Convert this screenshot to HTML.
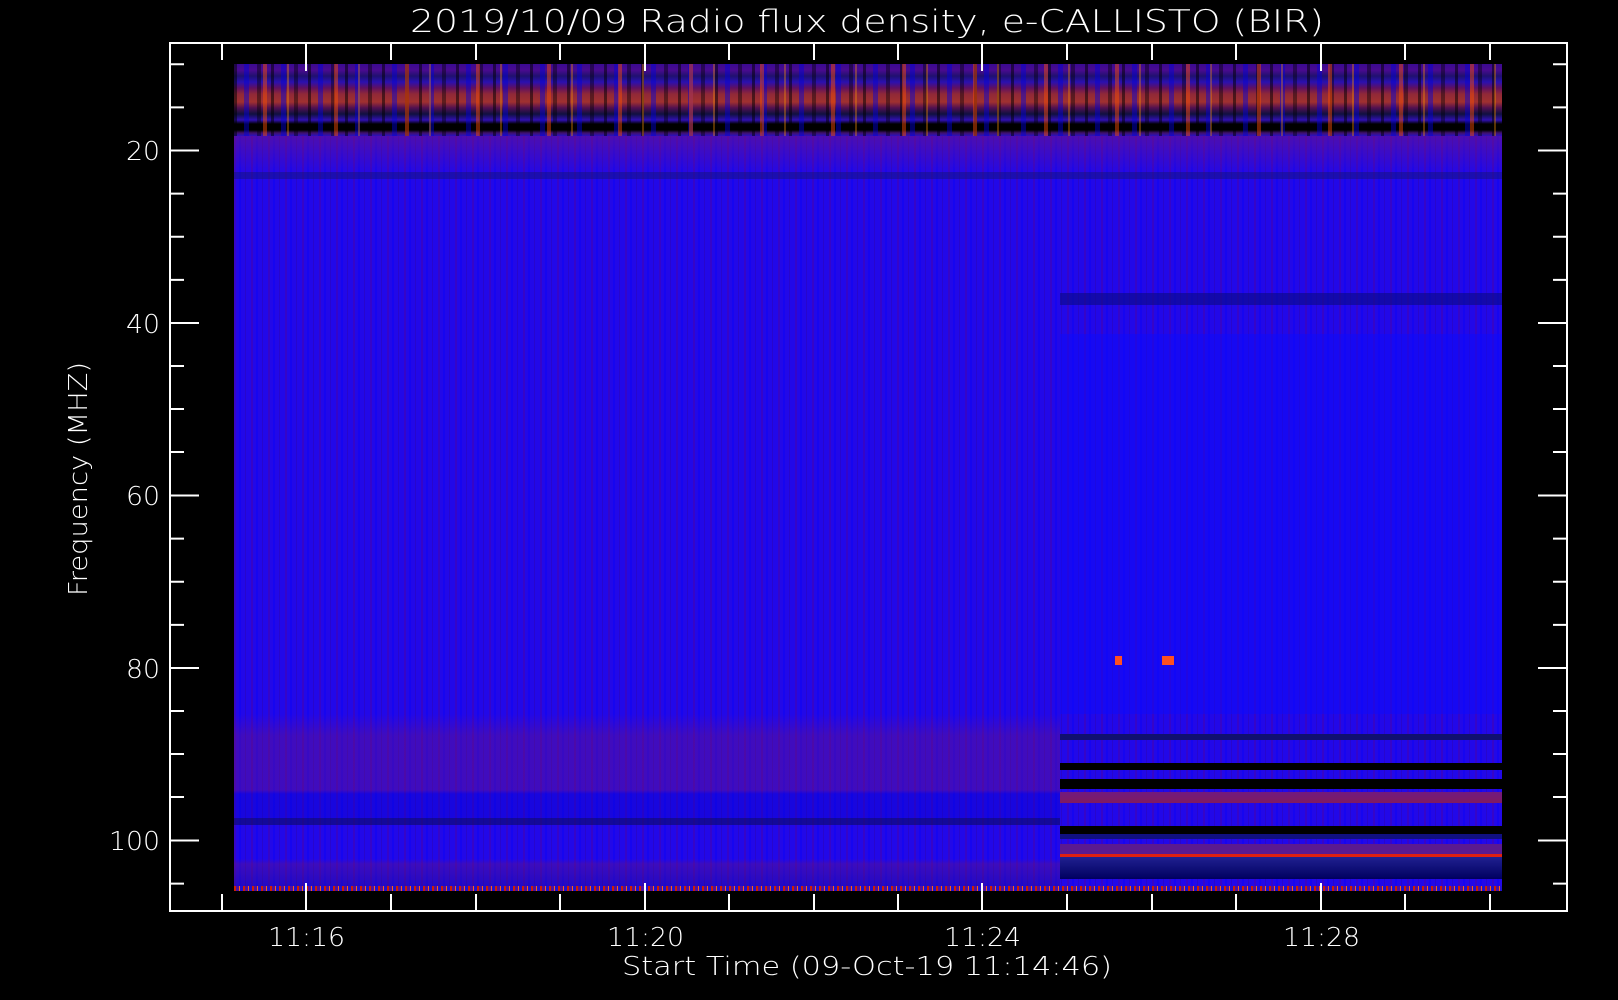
<!DOCTYPE html>
<html><head><meta charset="utf-8"><style>
html,body{margin:0;padding:0;background:#000;width:1618px;height:1000px;overflow:hidden}
#d{position:absolute;left:234px;top:64px;width:1268px;height:827px;background:#2208e8;overflow:hidden}
.b{position:absolute}
svg{position:absolute;left:0;top:0}
text{font-family:"DejaVu Sans","Liberation Sans",sans-serif;fill:#fff;font-weight:300}
</style></head><body>
<div id="d">
 <div class="b" style="left:0;top:0;width:1268px;height:827px;background:repeating-linear-gradient(90deg,rgba(90,0,140,.35) 0 2px,rgba(0,0,255,0) 2px 5px,rgba(0,0,255,.35) 5px 7px,rgba(0,0,255,0) 7px 11px,rgba(60,0,120,.25) 11px 12px,rgba(0,0,255,0) 12px 17px)"></div>
 <div class="b" style="left:0;top:0;width:1268px;height:72px;background:linear-gradient(180deg,#3a0a90 0,#4a0a90 6px,#201070 12px,#2a10b0 18px,#601060 24px,#902838 30px,#a03030 38px,#501050 44px,#101040 50px,#3010b0 56px,#000 60px,#000 66px,#401070 69px,#2a10c0 72px)"></div>
 <div class="b" style="left:0;top:0;width:1268px;height:72px;background:repeating-linear-gradient(90deg,rgba(0,0,0,.5) 0 3px,rgba(0,0,0,0) 3px 10px,rgba(0,0,220,.45) 10px 15px,rgba(0,0,0,0) 15px 23px,rgba(0,0,0,.4) 23px 27px,rgba(0,0,0,0) 27px 37px)"></div>
 <div class="b" style="left:0;top:0;width:1268px;height:72px;background:repeating-linear-gradient(90deg,rgba(255,80,0,0) 0 29px,rgba(255,80,0,.45) 29px 33px,rgba(255,80,0,0) 33px 53px,rgba(255,150,0,.35) 53px 55px,rgba(255,80,0,0) 55px 71px)"></div>
 <div class="b" style="left:0;top:72px;width:1268px;height:40px;background:linear-gradient(180deg,rgba(120,20,120,.5),rgba(0,0,0,0))"></div>
 <div class="b" style="left:0;top:108px;width:1268px;height:7px;background:rgba(20,20,120,.5)"></div>
 <div class="b" style="left:826px;top:229px;width:442px;height:12px;background:rgba(10,10,130,.6)"></div>
 <div class="b" style="left:826px;top:270px;width:442px;height:380px;background:rgba(10,10,255,.45)"></div>
 <div class="b" style="left:0;top:650px;width:826px;height:177px;background:linear-gradient(180deg,rgba(0,0,0,0) 0,rgba(120,20,110,.35) 22px,rgba(120,20,110,.35) 76px,rgba(0,0,200,.3) 80px,rgba(0,0,200,.3) 104px,rgba(10,10,100,.6) 104px,rgba(10,10,100,.6) 111px,rgba(0,0,0,0) 111px,rgba(0,0,0,0) 145px,rgba(110,20,110,.35) 150px,rgba(20,10,120,.3) 177px)"></div>
 <div class="b" style="left:826px;top:0;width:442px;height:827px;background:linear-gradient(180deg,rgba(0,0,0,0) 0,rgba(0,0,0,0) 670px,#101070 670px,#101070 676px,rgba(0,0,0,0) 676px,rgba(0,0,0,0) 699px,#000 699px,#000 706px,rgba(0,0,0,0) 706px,rgba(0,0,0,0) 715px,#000 715px,#000 725px,rgba(0,0,0,0) 725px,rgba(0,0,0,0) 728px,#701a80 728px,#801a60 739px,rgba(0,0,0,0) 739px,rgba(0,0,0,0) 762px,#000 762px,#000 770px,#101080 770px,#101080 775px,rgba(0,0,0,0) 775px,rgba(0,0,0,0) 780px,#5a1a90 780px,#5a1a90 790px,#e02010 790px,#e02010 793px,#202090 793px,#000060 815px,rgba(0,0,0,0) 815px)"></div>
 <div class="b" style="left:0;top:822px;width:1268px;height:5px;background:repeating-linear-gradient(90deg,#d02000 0 2px,#5010a0 2px 5px,#ff6010 5px 6px,#2010d0 6px 9px)"></div>
 <div class="b" style="left:881px;top:592px;width:7px;height:9px;background:#ff5020"></div>
 <div class="b" style="left:928px;top:592px;width:12px;height:9px;background:#ff5020"></div>
</div>
<svg width="1618" height="1000" viewBox="0 0 1618 1000">
<g stroke="#fff" stroke-width="2" fill="none">
<rect x="170" y="43" width="1397" height="868"/>
<path d="M170 150.5h29M170 193.6h14M170 236.8h14M170 279.9h14M170 323h29M170 366h14M170 409h14M170 452h14M170 495.5h29M170 538.6h14M170 581.8h14M170 624.9h14M170 668h29M170 711h14M170 754h14M170 797h14M170 840.5h29M170 883.6h14M170 107.4h14M170 64.3h14"/>
<path d="M1567 150.5h-29M1567 193.6h-14M1567 236.8h-14M1567 279.9h-14M1567 323h-29M1567 366h-14M1567 409h-14M1567 452h-14M1567 495.5h-29M1567 538.6h-14M1567 581.8h-14M1567 624.9h-14M1567 668h-29M1567 711h-14M1567 754h-14M1567 797h-14M1567 840.5h-29M1567 883.6h-14M1567 107.4h-14M1567 64.3h-14"/>
<path d="M222 911v-17M306 911v-28M391 911v-17M476 911v-17M560 911v-17M645 911v-28M729 911v-17M814 911v-17M898 911v-17M982 911v-28M1067 911v-17M1152 911v-17M1236 911v-17M1321 911v-28M1405 911v-17M1490 911v-17"/>
<path d="M222 43v17M306 43v28M391 43v17M476 43v17M560 43v17M645 43v28M729 43v17M814 43v17M898 43v17M982 43v28M1067 43v17M1152 43v17M1236 43v17M1321 43v28M1405 43v17M1490 43v17"/>
</g>
<text x="410" y="32" font-size="31" textLength="914" lengthAdjust="spacingAndGlyphs">2019/10/09  Radio flux density, e-CALLISTO (BIR)</text>
<g font-size="26">
<text x="126" y="160" textLength="34" lengthAdjust="spacingAndGlyphs">20</text>
<text x="126" y="333" textLength="34" lengthAdjust="spacingAndGlyphs">40</text>
<text x="126" y="505" textLength="34" lengthAdjust="spacingAndGlyphs">60</text>
<text x="126" y="678" textLength="34" lengthAdjust="spacingAndGlyphs">80</text>
<text x="109" y="850" textLength="51" lengthAdjust="spacingAndGlyphs">100</text>
<text x="268" y="946" textLength="77" lengthAdjust="spacingAndGlyphs">11:16</text>
<text x="607" y="946" textLength="77" lengthAdjust="spacingAndGlyphs">11:20</text>
<text x="944" y="946" textLength="77" lengthAdjust="spacingAndGlyphs">11:24</text>
<text x="1283" y="946" textLength="77" lengthAdjust="spacingAndGlyphs">11:28</text>
<text x="622" y="975" textLength="490" lengthAdjust="spacingAndGlyphs">Start Time (09-Oct-19 11:14:46)</text>
<text transform="translate(87 596) rotate(-90)" x="0" y="0" textLength="234" lengthAdjust="spacingAndGlyphs">Frequency (MHZ)</text>
</g>
</svg>
</body></html>
